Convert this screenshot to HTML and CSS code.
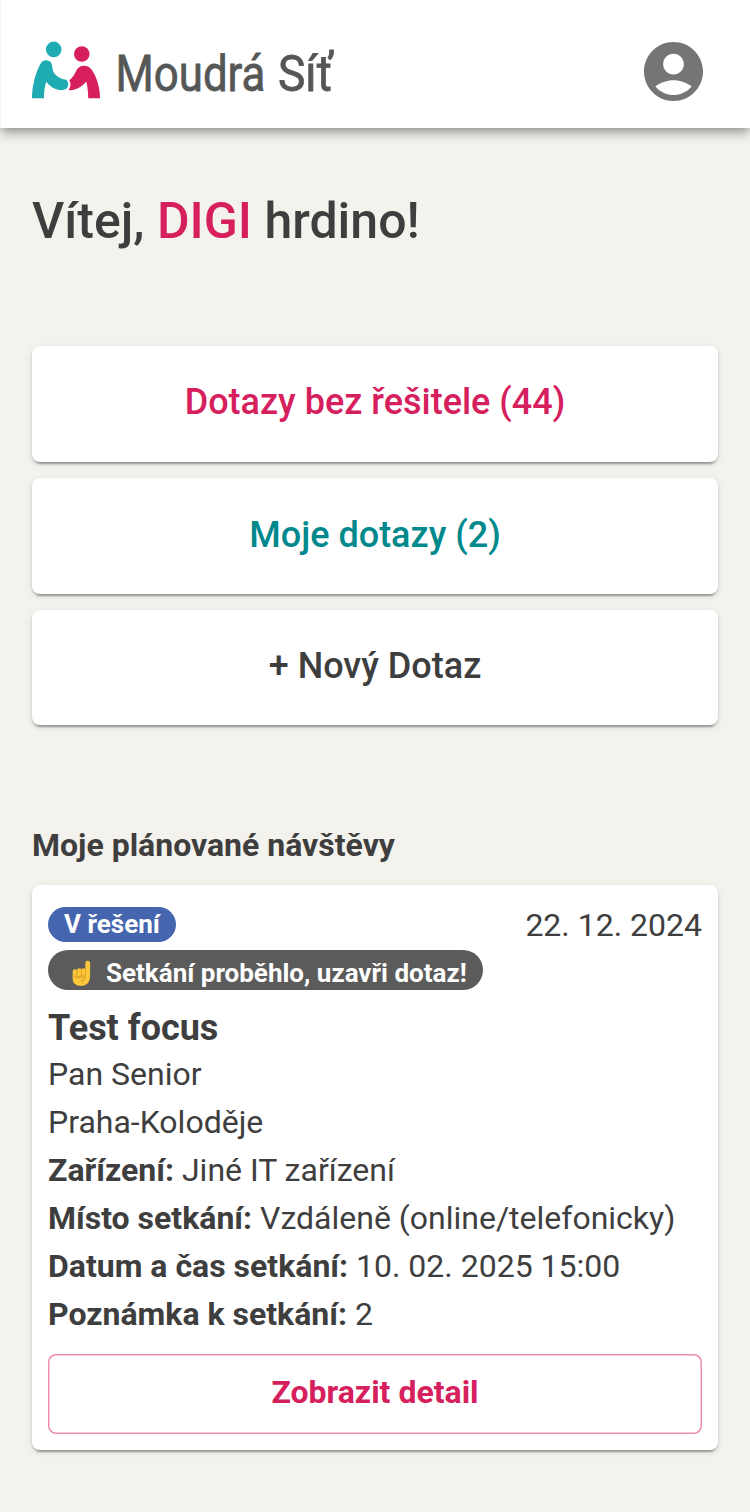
FILE: index.html
```html
<!DOCTYPE html>
<html lang="cs">
<head>
<meta charset="utf-8">
<title>Moudrá Síť</title>
<link rel="stylesheet" href="styles.css">
</head>
<body>
<header class="header">
  <svg class="logo" width="304" height="64" viewBox="0 0 304 64">
    <g fill="#1eabb2">
      <circle cx="21.7" cy="11.4" r="7.8"/>
      <path d="M0 60.3C0 47 4 33 9 25C11 21.5 17 21 19.4 25.2C20.7 28.2 20.2 31.5 21.7 34.5C24.5 38.5 29.4 41.4 34 41.6C38 45 36.5 51.7 31 52.1C24.5 52.6 18.5 49.4 14.3 43.8C12.7 48 12 54 12 60.3Z"/>
    </g>
    <g fill="#d81f5e">
      <circle cx="49.8" cy="16" r="7.8"/>
      <path d="M37.3 42.2C40.3 40.4 42 37.2 43.6 34C45.7 29.3 48.2 27.7 52.5 27.7C58.6 27.7 61.2 33.8 63.4 38.2C66 44.4 68 51.6 68 60.3H56.2C56.2 54 55.6 48.3 54.2 43.4C50 49.3 43.6 52.1 36.5 52.2C38.9 48.7 39.2 45.4 37.3 42.2Z"/>
    </g>
    <text class="logo-text" transform="translate(83.5 53) scale(.868 1)">Moudrá</text>
    <text class="logo-text" transform="translate(246 53) scale(.91 1)">Síť</text>
  </svg>
  <svg class="account" viewBox="2 2 20 20"><path d="M12 2C6.48 2 2 6.48 2 12s4.48 10 10 10 10-4.48 10-10S17.52 2 12 2zm0 4c1.93 0 3.5 1.57 3.5 3.5S13.93 13 12 13s-3.5-1.57-3.5-3.5S10.07 6 12 6zm0 14c-2.03 0-4.43-.82-6.14-2.88C7.55 15.8 9.68 15 12 15s4.45.8 6.14 2.12C16.43 19.18 14.03 20 12 20z"/></svg>
</header>
<main class="main">
  <h1 class="welcome">Vítej, <span class="pink">DIGI</span> hrdino!</h1>
  <nav class="actions">
    <a class="card action pink">Dotazy bez řešitele (44)</a>
    <a class="card action mine teal">Moje dotazy (2)</a>
    <a class="card action">+ Nový Dotaz</a>
  </nav>
  <h2 class="section-title">Moje plánované návštěvy</h2>
  <article class="card visit">
    <div class="visit-top">
      <span class="badge status">V řešení</span>
      <span class="date">22. 12. 2024</span>
    </div>
    <div class="badge notice">
      <svg class="finger" viewBox="0 0 21 28">
        <path fill="#fcc73a" d="M14 2.5Q14 .5 16.5 .5Q19 .5 19 3V17Q19 27 9.5 27Q1 27 .7 20V12Q.7 9.5 3 9.5Q4.3 9.5 5 10.3Q6 8.3 8 8.5Q9.3 8.7 9.8 9.5Q11.8 7.7 14 9.5Z"/>
        <path fill="none" stroke="#dd9a22" stroke-width="1" stroke-linecap="round" d="M5.1 10.5V16.5M9.8 9.8V16M14 9V15M1 16.5Q3 19.5 5.1 16.7Q7.8 19 9.8 16.2Q12 18.3 14 15M4 19Q10 16.7 14.4 18Q14 21 9.7 21.3Q11.3 22 11.2 24"/>
      </svg>
      <span>Setkání proběhlo, uzavři dotaz!</span>
    </div>
    <h3 class="visit-title">Test focus</h3>
    <p class="line">Pan Senior</p>
    <p class="line">Praha-Koloděje</p>
    <p class="line"><b>Zařízení:</b> Jiné IT zařízení</p>
    <p class="line"><b>Místo setkání:</b> Vzdáleně (online/telefonicky)</p>
    <p class="line"><b>Datum a čas setkání:</b> 10. 02. 2025 15:00</p>
    <p class="line"><b>Poznámka k setkání:</b> 2</p>
    <button class="detail">Zobrazit detail</button>
  </article>
</main>
</body>
</html>
```
FILE: styles.css
```css
* { box-sizing: border-box; }
body {
  margin: 0;
  min-height: 1512px;
  background: #f4f2ed;
  color: #3e3e3e;
  font-family: Roboto, sans-serif;
  font-size: 32px;
  line-height: 48px;
}
h1, h2, h3, p { margin: 0; }
.header {
  display: flex;
  justify-content: space-between;
  align-items: center;
  height: 128px;
  padding: 14px 47px 0 31px;
  border-left: 1px solid #f3f3f3;
  background: #fff;
  box-shadow: 0 4px 8px -2px rgba(0,0,0,.24), 0 8px 10px -1px rgba(0,0,0,.16), 0 2px 16px rgba(0,0,0,.08);
}
.logo { overflow: visible; margin-top: -3px; }
.logo-text { font-size: 50.5px; fill: #555757; stroke: #555757; stroke-width: .8px; }
.account { width: 59px; height: 59px; fill: #757575; }
.main { padding: 60px 32px 0; }
.welcome { font-size: 50px; line-height: 66px; font-weight: 500; }
.pink { color: #d6205d; }
.teal { color: #00898d; }
.actions { display: grid; gap: 16px; margin-top: 92px; }
.card {
  background: #fff;
  border-radius: 8px;
  box-shadow: 0 6px 2px -4px rgba(0,0,0,.2), 0 2px 2px rgba(0,0,0,.14), 0 2px 6px rgba(0,0,0,.12);
}
.action {
  display: flex;
  justify-content: center;
  align-items: center;
  height: 116px;
  padding-bottom: 4px;
  font-size: 36px;
  font-weight: 500;
}
.mine { padding-bottom: 2px; }
.action:last-child { height: 115px; padding-bottom: 3px; }
.section-title { margin-top: 96px; font-size: 32px; line-height: 48px; font-weight: 700; }
.visit { margin-top: 16px; height: 565px; padding: 16px; }
.visit-top { display: flex; justify-content: space-between; align-items: center; height: 48px; }
.badge { color: #fff; font-size: 26px; font-weight: 700; border-radius: 20px; }
.status { background: #4665af; height: 35px; line-height: 34px; margin-bottom: 2px; padding: 0 16px; }
.notice {
  display: flex;
  align-items: center;
  gap: 14px;
  width: fit-content;
  height: 40px;
  margin-top: 1px;
  padding: 6px 16px 0 24px;
  background: #5b5b5b;
}
.finger { width: 20px; height: 27px; }
.visit-title { margin-top: 16px; font-size: 36px; line-height: 44px; font-weight: 700; }
.detail {
  display: block;
  width: 100%;
  height: 80px;
  margin-top: 16px;
  padding: 0 0 4px;
  border: 0;
  box-shadow: inset 0 0 0 1.5px #eb8fae;
  border-radius: 8px;
  background: #fff;
  color: #d6205d;
  font: 700 32px/48px Roboto, sans-serif;
}
```
